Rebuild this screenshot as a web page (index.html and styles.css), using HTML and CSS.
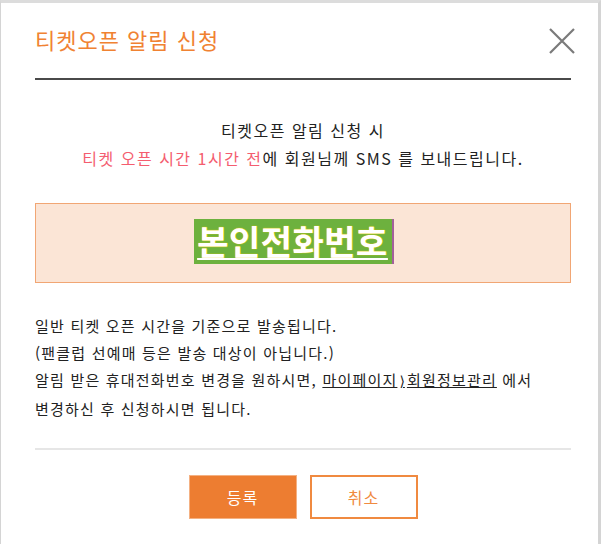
FILE: index.html
```html
<!DOCTYPE html>
<html lang="ko">
<head>
  <meta charset="UTF-8">
  <title>티켓오픈 알림 신청</title>
  <link rel="stylesheet" href="styles.css">
</head>
<body>
  <div class="popup">
    <div class="popup-head">
      <h1 class="popup-title">티켓오픈 알림 신청</h1>
      <button class="close-btn" aria-label="닫기">
        <svg width="28" height="26" viewBox="0 0 28 26">
          <path d="M2 1 L26 25 M26 1 L2 25" stroke="#7a7a7a" stroke-width="2.2" fill="none"/>
        </svg>
      </button>
    </div>

    <p class="intro">
      티켓오픈 알림 신청 시<br>
      <span class="hl">티켓 오픈 시간 1시간 전</span>에 회원님께 SMS 를 보내드립니다.
    </p>

    <div class="phone-box">
      <span class="phone-tag">본인전화번호</span>
    </div>

    <p class="notes">
      일반 티켓 오픈 시간을 기준으로 발송됩니다.<br>
      (팬클럽 선예매 등은 발송 대상이 아닙니다.)<br>
      알림 받은 휴대전화번호 변경을 원하시면, <a href="#">마이페이지<span class="gt">⟩</span>회원정보관리</a> 에서<br>
      변경하신 후 신청하시면 됩니다.
    </p>

    <div class="btn-row">
      <button class="btn btn-ok">등록</button>
      <button class="btn btn-cancel">취소</button>
    </div>
  </div>
</body>
</html>
```

FILE: styles.css
```css
html, body {
  margin: 0;
  height: 100%;
}
body {
  box-sizing: border-box;
  border-top: 3px solid #dcdcdc;
  border-left: 1px solid #d4d4d4;
  border-right: 3px solid #d4d4d4;
  background: #fff;
  font-family: "Noto Sans CJK KR", "Liberation Sans", sans-serif;
  color: #222;
}
.popup {
  padding: 0 27px 0 34px;
}
.popup-head {
  height: 71px;
  padding-bottom: 4px;
  display: flex;
  align-items: center;
  justify-content: space-between;
  border-bottom: 2px solid #4a4a4a;
}
.popup-title {
  margin: 0;
  font-size: 22px;
  font-weight: normal;
  color: #f08232;
  letter-spacing: 1px;
}
.close-btn {
  background: none;
  border: none;
  padding: 0;
  margin: 4px -5px 0 0;
  width: 28px;
  height: 26px;
  cursor: pointer;
}
.intro {
  margin: 36px 0 0;
  text-align: center;
  font-size: 16px;
  letter-spacing: 1.5px;
  line-height: 28px;
}
.hl {
  color: #f45d6f;
}
.phone-box {
  margin-top: 31px;
  height: 78px;
  border: 1px solid #f1a674;
  background: #fbe5d6;
  display: flex;
  align-items: center;
  justify-content: center;
}
.phone-tag {
  display: inline-block;
  height: 45px;
  line-height: 44px;
  padding: 0 4px 0 3px;
  margin-right: 18px;
  margin-top: -4px;
  background: #6db13e;
  border-right: 2px solid #a3609b;
  color: #fff;
  font-size: 34px;
  font-weight: bold;
  text-decoration: underline;
  text-decoration-thickness: 2px;
  text-underline-offset: 3px;
  text-shadow: 0 0 1px #f5d000, 0 0 1px #f5d000;
  letter-spacing: 0.5px;
}
.notes {
  margin: 29px 0 0;
  font-size: 15px;
  letter-spacing: 1.2px;
  line-height: 27px;
}
.notes a {
  color: #222;
  text-decoration: underline;
}
.gt {
  font-family: "DejaVu Sans", sans-serif;
  font-size: 14px;
  letter-spacing: 0;
  margin: 0 2px;
}
.btn-row {
  margin-top: 26px;
  border-top: 2px solid #e6e6e6;
  padding-top: 25px;
  display: flex;
  justify-content: center;
  gap: 13px;
}
.btn {
  width: 108px;
  height: 44px;
  font-family: inherit;
  font-size: 16px;
  letter-spacing: 1px;
  cursor: pointer;
}
.btn-ok {
  background: #ed7d31;
  border: 1px solid #f4b183;
  color: #fff;
}
.btn-cancel {
  background: #fff;
  border: 2px solid #f08a40;
  color: #f08a40;
}
```
